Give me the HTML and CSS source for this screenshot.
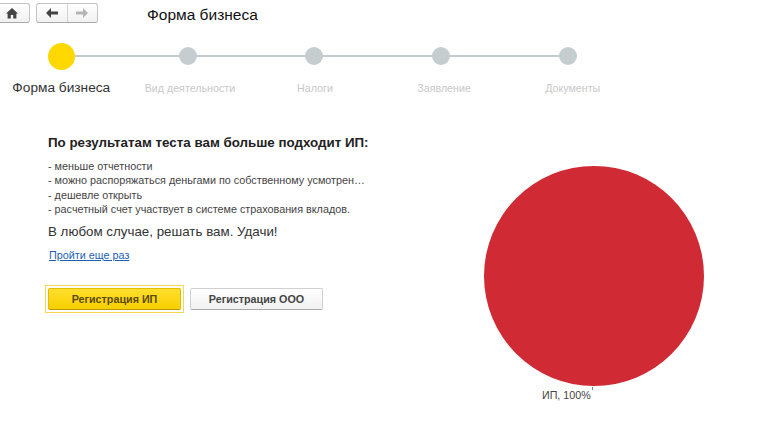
FILE: index.html
```html
<!DOCTYPE html>
<html lang="ru">

<head>
    <meta charset="UTF-8">
    <title>Форма бизнеса</title>
    <link rel="stylesheet" href="styles.css">
</head>

<body>
    <div class="header">
        <button class="tool-button home-button">
            <svg width="12" height="11" viewBox="0 0 12 11"><path d="M6 0 L12 5.6 L10.4 5.6 L10.4 10.5 L7.2 10.5 L7.2 7 L4.8 7 L4.8 10.5 L1.6 10.5 L1.6 5.6 L0 5.6 Z" fill="#444"/></svg>
        </button>
        <div class="tool-button nav-buttons">
            <span class="nav-part">
                <svg width="12" height="10" viewBox="0 0 12 10"><path d="M0 5 L5 0 L5 3.5 L12 3.5 L12 6.5 L5 6.5 L5 10 Z" fill="#444"/></svg>
            </span>
            <span class="nav-part nav-next">
                <svg width="12" height="10" viewBox="0 0 12 10"><path d="M12 5 L7 0 L7 3.5 L0 3.5 L0 6.5 L7 6.5 L7 10 Z" fill="#b5b5b5"/></svg>
            </span>
        </div>
        <h1>Форма бизнеса</h1>
    </div>

    <div class="steps">
        <div class="step active"><span class="dot"></span><span class="step-name">Форма бизнеса</span></div>
        <div class="step"><span class="dot"></span><span class="step-name">Вид деятельности</span></div>
        <div class="step"><span class="dot"></span><span class="step-name">Налоги</span></div>
        <div class="step"><span class="dot"></span><span class="step-name">Заявление</span></div>
        <div class="step"><span class="dot"></span><span class="step-name">Документы</span></div>
    </div>

    <div class="content">
        <div class="result">
            <h2>По результатам теста вам больше подходит ИП:</h2>
            <ul class="reasons">
                <li>- меньше отчетности</li>
                <li>- можно распоряжаться деньгами по собственному усмотрен…</li>
                <li>- дешевле открыть</li>
                <li>- расчетный счет участвует в системе страхования вкладов.</li>
            </ul>
            <p class="luck">В любом случае, решать вам. Удачи!</p>
            <a class="again" href="#">Пройти еще раз</a>
            <div class="actions">
                <span class="focus-frame"><button class="button primary">Регистрация ИП</button></span>
                <button class="button">Регистрация ООО</button>
            </div>
        </div>
        <div class="chart">
            <div class="pie"></div>
            <div class="pie-label">ИП, 100%</div>
        </div>
    </div>
</body>

</html>
```

FILE: styles.css
```css
body {
    font-family: "Liberation Sans", Arial, sans-serif;
    margin: 0;
    padding: 0;
    width: 772px;
    height: 443px;
    overflow: hidden;
    background-color: #fff;
    color: #333;
}

.header {
    display: flex;
    align-items: center;
    height: 20px;
    padding-top: 3px;
    margin-left: -6px;
}

.header h1 {
    margin: 4px 0 0 49px;
    font-size: 15.5px;
    font-weight: normal;
    color: #111;
}

.tool-button {
    display: flex;
    align-items: center;
    justify-content: center;
    box-sizing: border-box;
    height: 20px;
    padding: 0;
    background: linear-gradient(#fff, #f1f1f1);
    border: 1px solid #c4c4c4;
    border-bottom-color: #a9a9a9;
    border-radius: 3px;
}

.home-button {
    width: 36px;
    margin-right: 6px;
}

.nav-buttons {
    width: 62px;
}

.nav-part {
    display: flex;
    align-items: center;
    justify-content: center;
    flex: 1;
    height: 100%;
}

.nav-next {
    border-left: 1px solid #d2d2d2;
}

.steps {
    display: flex;
    width: 633px;
    margin: 20px 0 0 -2px;
}

.step {
    position: relative;
    display: flex;
    flex-direction: column;
    align-items: center;
    flex: 1;
    min-width: 0;
}

.step::after {
    content: "";
    position: absolute;
    top: 12px;
    left: 50%;
    width: 100%;
    height: 2px;
    background-color: #c5cbcc;
}

.step:last-child::after {
    display: none;
}

.dot {
    position: relative;
    z-index: 1;
    width: 18px;
    height: 18px;
    margin: 4px 0 4px;
    border-radius: 50%;
    background-color: #c5cdcf;
}

.step-name {
    margin-top: 12px;
    font-size: 10.7px;
    line-height: 14px;
    white-space: nowrap;
    color: #c8c8c8;
}

/* labels do not sit exactly under their dots */
.step:nth-child(2) .step-name {
    margin-left: 4px;
}

.step:nth-child(3) .step-name {
    margin-left: 1px;
}

.step:nth-child(4) .step-name {
    margin-left: 6px;
}

.step:nth-child(5) .step-name {
    margin-left: 10px;
}

.step.active .dot {
    width: 27px;
    height: 27px;
    margin: 0 0 -1px;
    background-color: #ffd800;
}

.step.active .step-name {
    font-size: 13.7px;
    color: #333;
}

.content {
    display: flex;
    justify-content: space-between;
    padding-left: 48px;
}

.result {
    width: 340px;
    padding-top: 39px;
}

.result h2 {
    margin: 0;
    font-size: 13.35px;
    line-height: 17px;
    color: #222;
}

.reasons {
    list-style: none;
    margin: 8px 0 0;
    padding: 0;
    font-size: 10.8px;
    line-height: 14.3px;
    white-space: nowrap;
    color: #444;
}

.luck {
    margin: 7px 0 0;
    font-size: 13.35px;
    line-height: 17px;
}

.again {
    display: inline-block;
    margin: 8px 0 0 1px;
    font-size: 10.8px;
    line-height: 14px;
    color: #1c5fb4;
}

.actions {
    display: flex;
    align-items: center;
    gap: 6px;
    margin-top: 22px;
    margin-left: -3px;
}

.focus-frame {
    display: flex;
    padding: 2px;
    border: 1px solid #f7d654;
}

.button {
    box-sizing: border-box;
    width: 133px;
    height: 22px;
    padding: 0;
    font-family: inherit;
    font-size: 10.75px;
    font-weight: bold;
    color: #444;
    background: linear-gradient(#fff, #f0f0f0);
    border: 1px solid #d0d0d0;
    border-bottom-color: #aaa;
    border-radius: 2px;
}

.button.primary {
    color: #5a4a00;
    background: linear-gradient(#ffdf2e, #f8cf00);
    border-color: #e3bd00;
    border-bottom-color: #b99a00;
}

.chart {
    display: flex;
    flex-direction: column;
    align-items: center;
    width: 220px;
    margin: 71px 68px 0 0;
}

.pie {
    width: 220px;
    height: 220px;
    border-radius: 50%;
    background-color: #d02b35;
}

.pie-label {
    position: relative;
    align-self: flex-start;
    margin: 2px 0 0 58px;
    font-size: 10.7px;
    line-height: 14px;
    color: #444;
}

.pie-label::after {
    content: "";
    position: absolute;
    top: -1px;
    right: -2px;
    width: 1px;
    height: 3px;
    background-color: #888;
}
```
